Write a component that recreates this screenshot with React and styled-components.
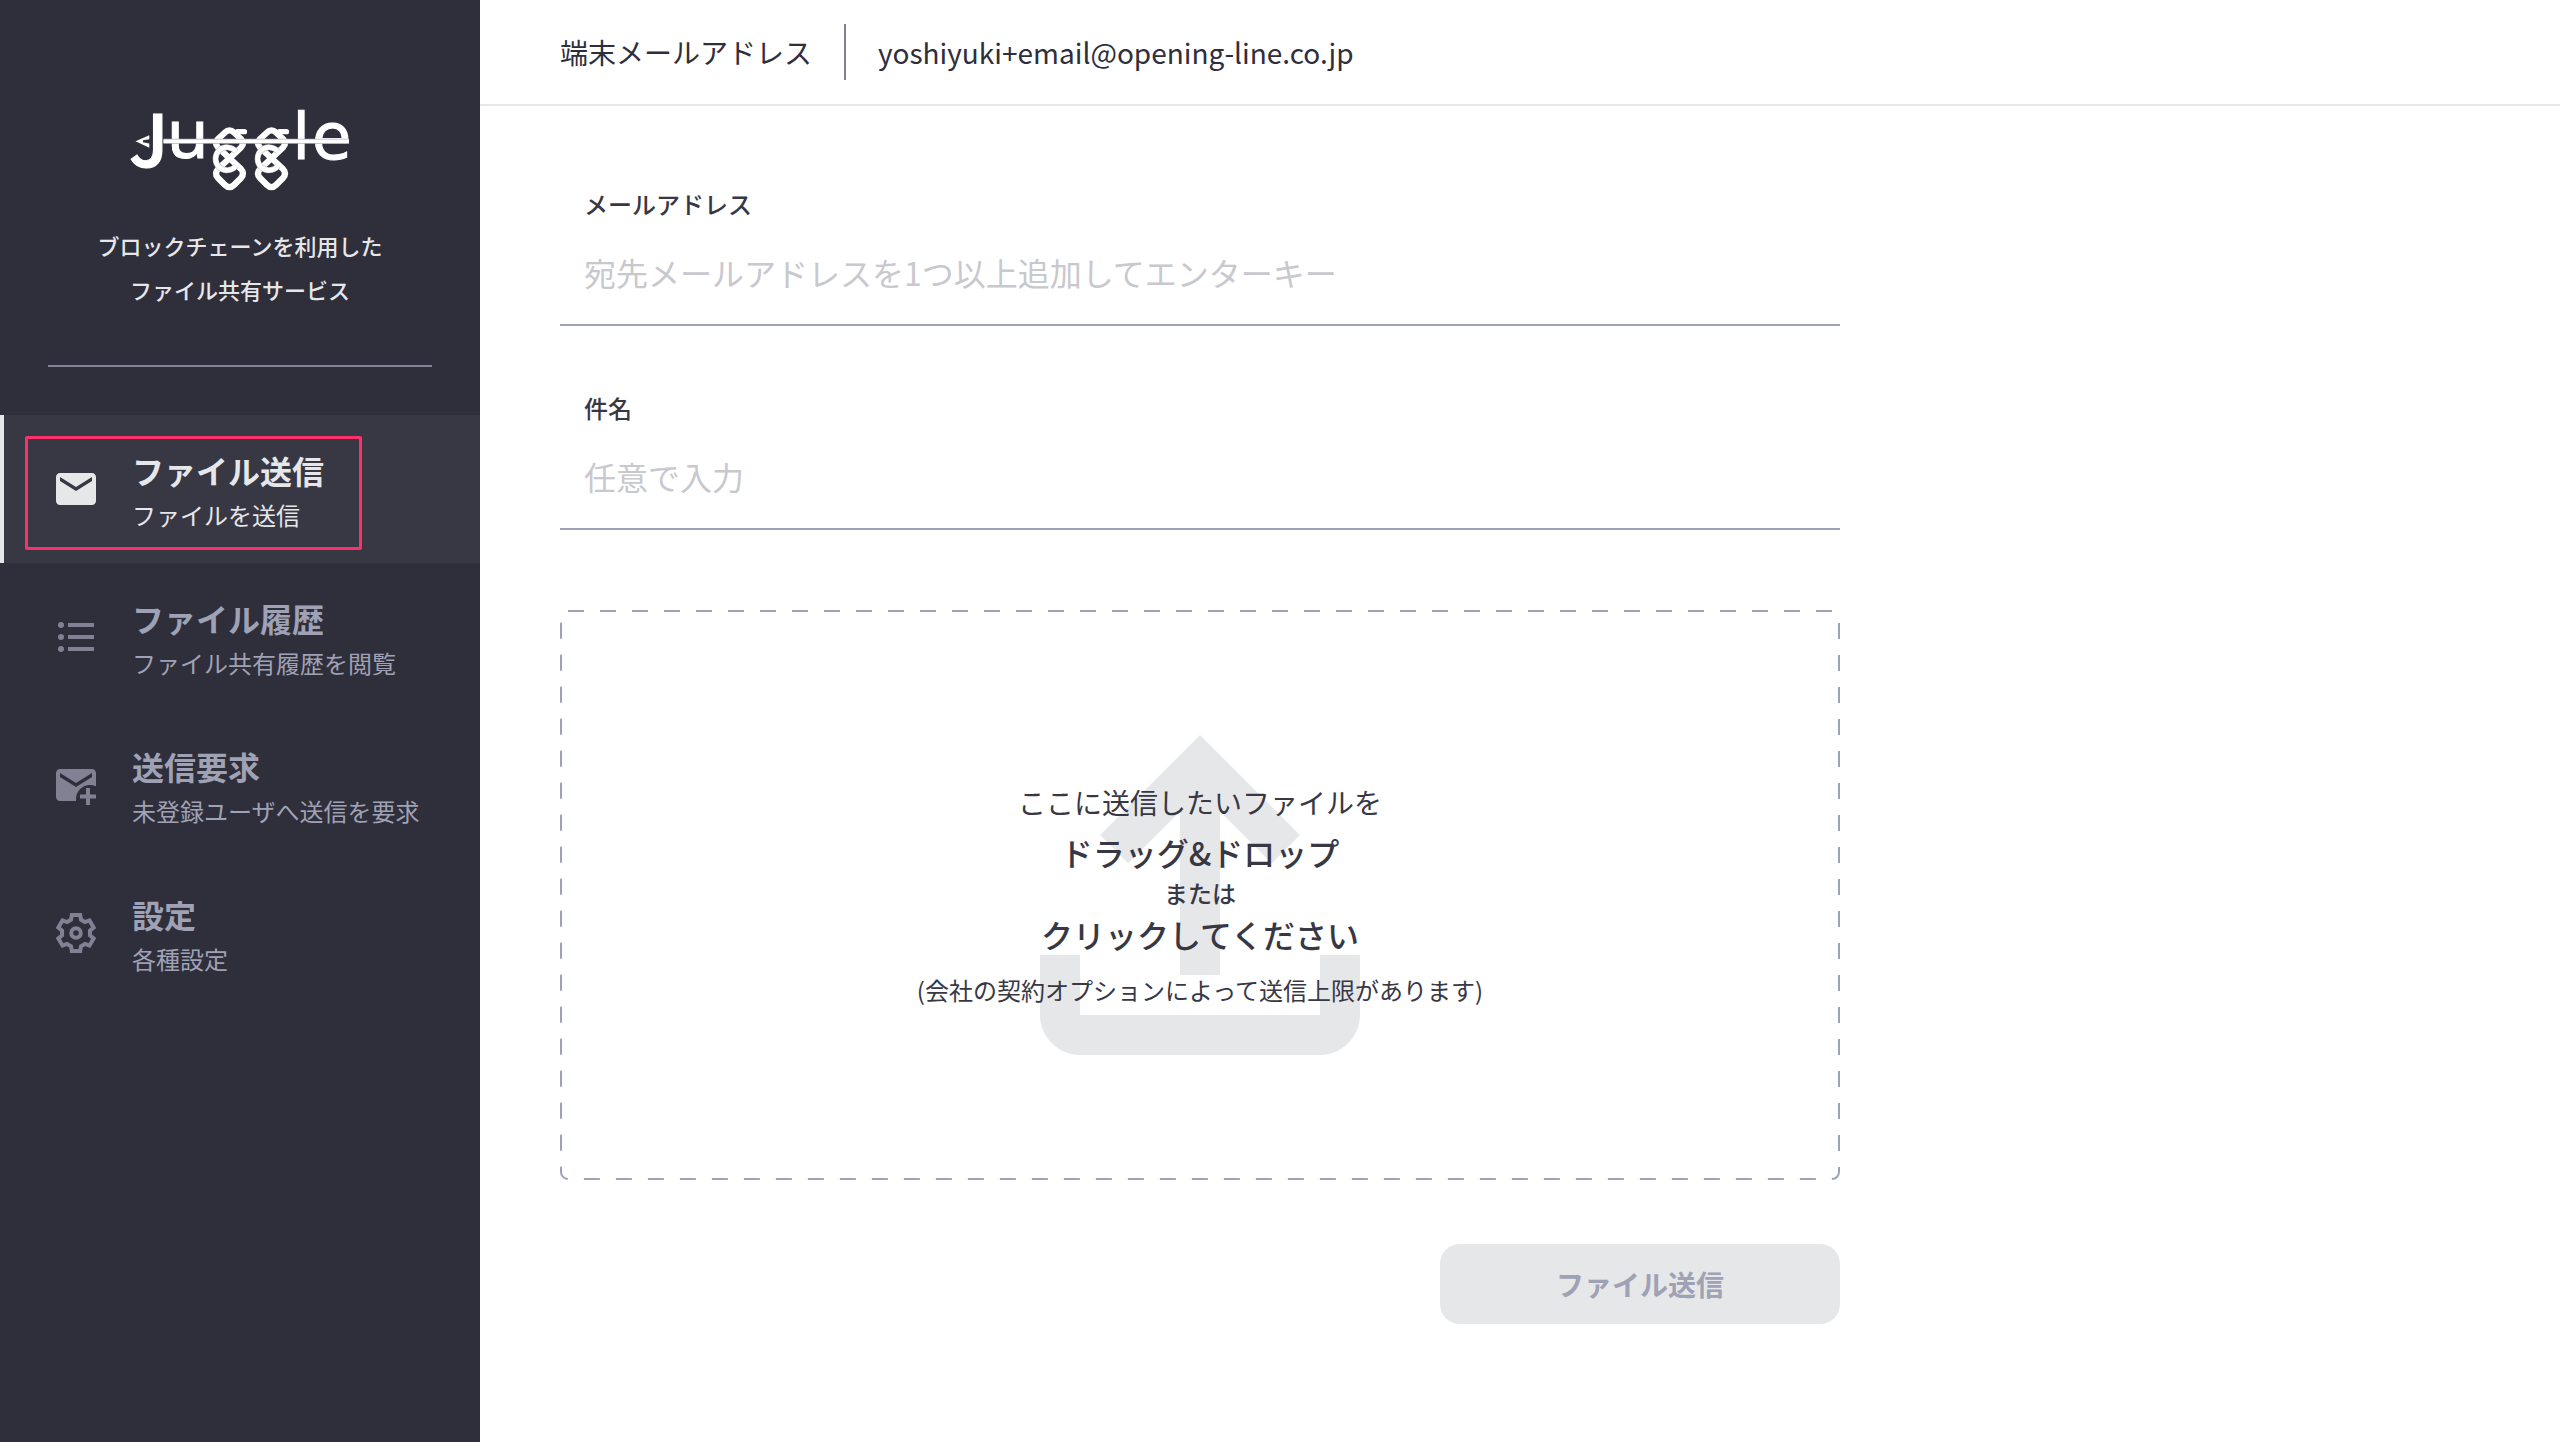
import React from 'react'
import styled, { createGlobalStyle } from 'styled-components'
import { MdEmail, MdOutlineFileUpload } from 'react-icons/md'

const GlobalStyle = createGlobalStyle`
*, *::before, *::after {
  box-sizing: border-box;
}
body {
  margin: 0;
  background-color: #ffffff;
  color: #2f2e3b;
  font-family: "Noto Sans CJK JP", "Noto Sans", sans-serif;
}
button, input {
  font-family: inherit;
}
`

const Page = styled.div`
display: flex;
min-height: 100vh;
`

const Sidebar = styled.aside`
width: 480px;
flex-shrink: 0;
background-color: #2f2e3b;
`

const Brand = styled.div`
display: flex;
flex-direction: column;
align-items: center;
margin: 0 48px;
padding: 108px 0 54px;
border-bottom: 2px solid #828193;
`

const Tagline = styled.p`
margin: 31px 0 0;
color: #e6e7e9;
font-size: 22px;
font-weight: 500;
line-height: 44px;
text-align: center;
`

const Nav = styled.nav`
display: flex;
flex-direction: column;
margin: 48px 0 0;
`

const NavLink = styled.a`
display: flex;
align-items: center;
gap: 32px;
position: relative;
height: 148px;
padding: 0 0 0 48px;
border-left: 4px solid ${props => (props.$active ? '#e6e7e9' : 'transparent')};
background-color: ${props => (props.$active ? '#383845' : 'transparent')};
color: ${props => (props.$active ? '#e6e7e9' : '#9fa2b4')};
text-decoration: none;
`

const NavIcon = styled.span`
display: flex;
color: ${props => (props.$active ? '#e6e7e9' : '#828193')};
`

const NavLabel = styled.span`
padding: 5px 0 0;
`

const NavTitle = styled.span`
display: block;
font-size: 32px;
font-weight: 700;
line-height: 46px;
`

const NavText = styled.span`
display: block;
font-size: 24px;
line-height: 44px;
`

const Highlight = styled.span`
position: absolute;
left: 21px;
top: 21px;
width: 337px;
height: 114px;
border: 3px solid #ff2f6b;
border-radius: 2px;
`

const Main = styled.main`
flex: 1;
`

const Header = styled.header`
display: flex;
align-items: center;
height: 106px;
padding: 0 80px;
border-bottom: 2px solid #e6e7e9;
font-size: 28px;
`

const HeaderLabel = styled.span`
margin: 0 32px 0 0;
`

const HeaderValue = styled.span`
display: flex;
align-items: center;
height: 56px;
padding: 0 0 0 32px;
border-left: 2px solid #828193;
`

const Form = styled.form`
display: flex;
flex-direction: column;
max-width: 1440px;
padding: 80px;
`

const Field = styled.div`
display: flex;
flex-direction: column;
height: 140px;
margin: 0 0 64px;
border-bottom: 2px solid #9fa2b4;
`

const Label = styled.label`
padding: 0 24px;
color: #383845;
font-size: 24px;
font-weight: 500;
line-height: 36px;
`

const Input = styled.input`
height: 100px;
padding: 0 24px;
border: 0;
outline: 0;
background: transparent;
color: #383845;
font-size: 32px;

&::placeholder {
  color: #c8c8ce;
  opacity: 1;
}
`

const DropZone = styled.button`
display: grid;
place-items: center;
height: 570px;
margin: 16px 0 64px;
padding: 0;
border: 0;
background: transparent;
color: #383845;
cursor: pointer;

& > * {
  grid-area: 1 / 1;
}
`

const DashedFrame = styled.svg`
width: 100%;
height: 100%;

rect {
  width: calc(100% - 2px);
  height: calc(100% - 2px);
}
`

const UploadIcon = styled(MdOutlineFileUpload)`
width: 480px;
height: 480px;
color: #e6e7e9;
`

const DropText = styled.span`
display: flex;
flex-direction: column;
align-items: center;
padding: 8px 0 0;
`

const DropLine = styled.span`
font-size: ${props => props.$size}px;
font-weight: ${props => (props.$strong ? 500 : 400)};
line-height: ${props => props.$line}px;
`

const SubmitButton = styled.button`
align-self: flex-end;
width: 400px;
height: 80px;
border: 0;
border-radius: 20px;
background-color: #e6e7e9;
color: #9fa2b4;
font-size: 28px;
font-weight: 700;
`

// the two knots share one shape, the second sits 42 units to the right
const Knot = ({ x }) => (
    <g transform={`translate(${x} 0)`} strokeLinecap="round" strokeLinejoin="round">
        <path d="M8 23.7H15" strokeWidth="5.2" />
        <path d="M-4.5 24.5Q0 20 4.5 24.5L11.5 31Q15.5 35 11.5 39.5L-11.5 61Q-15.5 65.3 -11.5 70L-4.5 77Q0 81.5 4.500 77L11.5 70Q15.5 65.3 11.5 61L-11.5 39.5Q-15.5 35 -11.5 31Z" strokeWidth="6.2" />
        <g strokeLinecap="butt">
            <path d="M6.5 43.5A11.5 11.5 0 1 0 6.5 58" stroke="#b4b4bc" strokeWidth="5.800" />
            <path d="M6.5 43.5A11.5 11.5 0 1 0 6.5 58" strokeWidth="4.800" />
        </g>
    </g>
)

const Logo = () => (
    <svg width="218" height="84" viewBox="0 0 218 84" overflow="visible" role="img" aria-label="Juggle" fill="none" stroke="#ffffff">
        <path d="M4.5 33.3L18.3 27.3V31.2L12 32.3V34.3L18.3 35.4V39.7Z" fill="#ffffff" stroke="none" />
        <g fill="#ffffff" fontFamily="Noto Sans, sans-serif" fontSize="67">
            <text x="-2" y="59" fontFamily="Noto Sans CJK JP, sans-serif" fontSize="72" fontWeight="500">J</text>
            <text x="36" y="49.5">u</text>
            <text x="162" y="51" fontSize="64">l</text>
            <text x="181" y="51" fontFamily="DejaVu Sans, sans-serif" fontSize="64">e</text>
        </g>
        <Knot x={98.5} />
        <Knot x={140.5} />
        <path d="M32.5 33.2H218" stroke="#b4b4bc" strokeWidth="5" />
        <path d="M32.5 33.2H218" strokeWidth="3.6" />
    </svg>
)

const ListIcon = () => (
    <svg width="48" height="48" viewBox="0 0 24 24" fill="currentColor" aria-hidden="true">
        <circle cx="4.5" cy="6" r="1.5" />
        <circle cx="4.5" cy="12" r="1.5" />
        <circle cx="4.5" cy="18" r="1.5" />
        <path d="M8 5h13v2H8zM8 11h13v2H8zM8 17h13v2H8z" />
    </svg>
)

const MailPlusIcon = () => (
    <svg width="48" height="48" viewBox="0 0 24 24" fill="currentColor" aria-hidden="true">
        <path fillRule="evenodd" d="M12 19c0-3.87 3.13-7 7-7 1.08 0 2.09.25 3 .59V6c0-1.1-.9-2-2-2H4c-1.1 0-2 .9-2 2v12c0 1.1.9 2 2 2h8zM12 13L4 8V6l8 5 8-5v2z" />
        <path d="M17 13.5h2v3.2h3v2h-3v3.3h-2v-3.3h-3v-2h3z" />
    </svg>
)

const GearIcon = () => (
    <svg width="48" height="48" viewBox="-12 -12 24 24" fill="none" stroke="currentColor" strokeWidth="2" aria-hidden="true">
        <path d="M-2.1 -9L2.1 -9L2.5 -6.6L4.47 -5.47L6.74 -6.32L8.84 -2.68L6.97 -1.13V1.13L8.84 2.68L6.74 6.32L4.47 5.47L2.5 6.6L2.1 9L-2.1 9L-2.5 6.6L-4.47 5.47L-6.74 6.32L-8.84 2.68L-6.97 1.13V-1.13L-8.84 -2.68L-6.74 -6.32L-4.47 -5.47L-2.5 -6.6Z" />
        <circle r="2.4" />
    </svg>
)

const navItems = [
    { title: 'ファイル送信', text: 'ファイルを送信', icon: <MdEmail size={48} />, active: true },
    { title: 'ファイル履歴', text: 'ファイル共有履歴を閲覧', icon: <ListIcon /> },
    { title: '送信要求', text: '未登録ユーザへ送信を要求', icon: <MailPlusIcon /> },
    { title: '設定', text: '各種設定', icon: <GearIcon /> },
]

const App = () => {
    const renderNav = navItems.map(item => (
        <NavLink key={item.title} href="#" $active={item.active}>
            <NavIcon $active={item.active}>{item.icon}</NavIcon>
            <NavLabel>
                <NavTitle>{item.title}</NavTitle>
                <NavText>{item.text}</NavText>
            </NavLabel>
            {item.active && <Highlight />}
        </NavLink>
    ))

    return (
        <>
            <GlobalStyle />
            <Page>
                <Sidebar>
                    <Brand>
                        <Logo />
                        <Tagline>ブロックチェーンを利用した<br />ファイル共有サービス</Tagline>
                    </Brand>
                    <Nav>{renderNav}</Nav>
                </Sidebar>
                <Main>
                    <Header>
                        <HeaderLabel>端末メールアドレス</HeaderLabel>
                        <HeaderValue>yoshiyuki+email@opening-line.co.jp</HeaderValue>
                    </Header>
                    <Form onSubmit={e => e.preventDefault()}>
                        <Field>
                            <Label htmlFor="email">メールアドレス</Label>
                            <Input id="email" type="text" placeholder="宛先メールアドレスを1つ以上追加してエンターキー" />
                        </Field>
                        <Field>
                            <Label htmlFor="subject">件名</Label>
                            <Input id="subject" type="text" placeholder="任意で入力" />
                        </Field>
                        <DropZone type="button">
                            <DashedFrame aria-hidden="true">
                                <rect x="1" y="1" rx="7" fill="none" stroke="#9fa2b4" strokeWidth="2" strokeDasharray="16 16" />
                            </DashedFrame>
                            <UploadIcon />
                            <DropText>
                                <DropLine $size={28} $line={54}>ここに送信したいファイルを</DropLine>
                                <DropLine $size={32} $line={46} $strong>ドラッグ&amp;ドロップ</DropLine>
                                <DropLine $size={24} $line={36} $strong>または</DropLine>
                                <DropLine $size={32} $line={46} $strong>クリックしてください</DropLine>
                                <DropLine $size={24} $line={66}>(会社の契約オプションによって送信上限があります)</DropLine>
                            </DropText>
                        </DropZone>
                        <SubmitButton type="submit">ファイル送信</SubmitButton>
                    </Form>
                </Main>
            </Page>
        </>
    )
}

export default App
